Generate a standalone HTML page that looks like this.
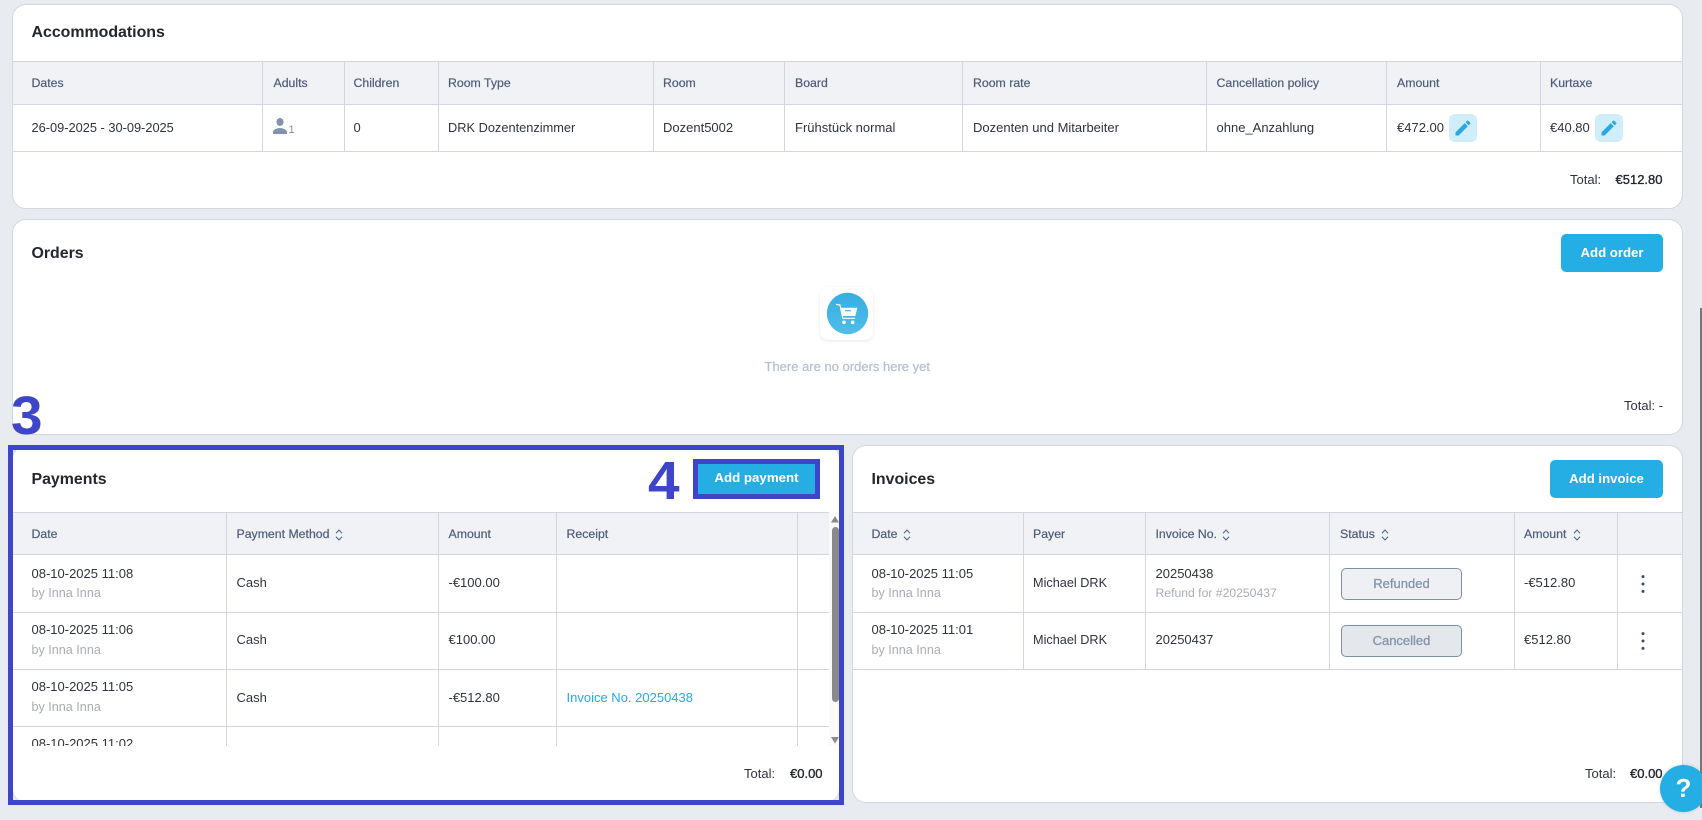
<!DOCTYPE html>
<html lang="en">
<head>
<meta charset="utf-8">
<title>Booking</title>
<style>
html,body{margin:0;padding:0;width:1702px;height:820px;overflow:hidden;background:#e8ebf0;font-family:"Liberation Sans",sans-serif;color:#2b2f36}
.card{position:absolute;background:#fff;border:1px solid #d3d7de;border-radius:14px;box-sizing:border-box}
.t{position:absolute;white-space:nowrap;line-height:20px;font-size:13px;color:#2f333a}
.ti{font-size:15.9px;font-weight:700;color:#23262c}
.th{font-size:12.3px;color:#4d5c78;-webkit-text-stroke:.2px #4d5c78}
.by{font-size:12.6px;color:#a9acb2}
.b{-webkit-text-stroke:.35px #23262c;color:#23262c}
.h{position:absolute;height:1px;background:#d3d6df}
.v{position:absolute;width:1px;background:#d3d6df}
.hd{position:absolute;background:#f0f2f6}
.btn{position:absolute;background:#25aee4;border-radius:5px;color:#fff;font-size:13.2px;font-weight:700;line-height:38px;text-align:center}
.edit{position:absolute;width:28px;height:28px;background:#d0eefa;border-radius:6px}
.edit svg{position:absolute;left:4px;top:4px}
.st{position:absolute;box-sizing:border-box;border:1px solid #7d90aa;border-radius:5px;text-align:center;font-size:13px;line-height:30px;color:#8494ab;-webkit-text-stroke:.3px #8494ab;background:#eef0f4}
svg{position:absolute;display:block}
.big{position:absolute;font-weight:700;font-size:54px;line-height:60px;color:#3f45c9;transform:scaleX(1.05);transform-origin:0 0}
a{color:#2aa9e1;text-decoration:none}
</style>
</head>
<body>

<!-- Accommodations -->
<div class="card" style="left:12px;top:4px;width:1671px;height:205px"></div>
<div class="t ti" style="left:31.5px;top:23px">Accommodations</div>
<div class="hd" style="left:13px;top:61px;width:1669px;height:43px"></div>
<div class="h" style="left:13px;top:61px;width:1669px"></div>
<div class="h" style="left:13px;top:104px;width:1669px"></div>
<div class="h" style="left:13px;top:151px;width:1669px"></div>
<div class="v" style="left:262px;top:61px;height:90px"></div>
<div class="v" style="left:344px;top:61px;height:90px"></div>
<div class="v" style="left:438px;top:61px;height:90px"></div>
<div class="v" style="left:653px;top:61px;height:90px"></div>
<div class="v" style="left:784px;top:61px;height:90px"></div>
<div class="v" style="left:962px;top:61px;height:90px"></div>
<div class="v" style="left:1206px;top:61px;height:90px"></div>
<div class="v" style="left:1386px;top:61px;height:90px"></div>
<div class="v" style="left:1540px;top:61px;height:90px"></div>
<div class="t th" style="left:31.5px;top:73px">Dates</div>
<div class="t th" style="left:273.5px;top:73px">Adults</div>
<div class="t th" style="left:353.5px;top:73px">Children</div>
<div class="t th" style="left:448px;top:73px">Room Type</div>
<div class="t th" style="left:663px;top:73px">Room</div>
<div class="t th" style="left:795px;top:73px">Board</div>
<div class="t th" style="left:973px;top:73px">Room rate</div>
<div class="t th" style="left:1216.5px;top:73px">Cancellation policy</div>
<div class="t th" style="left:1397px;top:73px">Amount</div>
<div class="t th" style="left:1550px;top:73px">Kurtaxe</div>
<div class="t" style="left:31.5px;top:117.5px;font-size:12.8px">26-09-2025 - 30-09-2025</div>
<svg style="left:273px;top:118px" width="14" height="16" viewBox="4 4 16 16" preserveAspectRatio="none"><path fill="#8293ab" d="M12 12c2.21 0 4-1.79 4-4s-1.79-4-4-4-4 1.79-4 4 1.79 4 4 4zm0 2c-2.67 0-8 1.34-8 4v2h16v-2c0-2.66-5.33-4-8-4z"/></svg>
<div class="t" style="left:288.5px;top:120px;font-size:11px;color:#8b8f96">1</div>
<div class="t" style="left:353.5px;top:117.5px">0</div>
<div class="t" style="left:448px;top:117.5px;font-size:12.8px">DRK Dozentenzimmer</div>
<div class="t" style="left:663px;top:117.5px">Dozent5002</div>
<div class="t" style="left:795px;top:117.5px">Frühstück normal</div>
<div class="t" style="left:973px;top:117.5px">Dozenten und Mitarbeiter</div>
<div class="t" style="left:1216.5px;top:117.5px">ohne_Anzahlung</div>
<div class="t" style="left:1397px;top:117.5px">€472.00</div>
<div class="edit" style="left:1449px;top:114px"><svg width="20" height="20" viewBox="0 0 24 24"><path fill="#2aa8e6" d="M3 17.25V21h3.75L17.81 9.94l-3.75-3.75L3 17.25zM20.71 7.04c.39-.39.39-1.02 0-1.41l-2.34-2.34c-.39-.39-1.02-.39-1.41 0l-1.83 1.83 3.75 3.75 1.83-1.83z"/></svg></div>
<div class="t" style="left:1550px;top:117.5px">€40.80</div>
<div class="edit" style="left:1595px;top:114px"><svg width="20" height="20" viewBox="0 0 24 24"><path fill="#2aa8e6" d="M3 17.25V21h3.75L17.81 9.94l-3.75-3.75L3 17.25zM20.71 7.04c.39-.39.39-1.02 0-1.41l-2.34-2.34c-.39-.39-1.02-.39-1.41 0l-1.83 1.83 3.75 3.75 1.83-1.83z"/></svg></div>
<div class="t" style="left:1570px;top:170px">Total:</div>
<div class="t b" style="left:1615.5px;top:170px">€512.80</div>

<!-- Orders -->
<div class="card" style="left:12px;top:219px;width:1671px;height:216px"></div>
<div class="t ti" style="left:31.5px;top:243.5px">Orders</div>
<div class="btn" style="left:1561px;top:234px;width:102px;height:38px">Add order</div>
<div style="position:absolute;left:820px;top:287px;width:53px;height:53px;background:#fff;border-radius:8px;box-shadow:0 1px 3px rgba(60,70,90,.13)"></div>
<svg style="left:820px;top:287px" width="53" height="53" viewBox="820 287 53 53">
<defs><linearGradient id="g" x1="0" y1="0" x2="0" y2="1"><stop offset="0" stop-color="#35aee2"/><stop offset="1" stop-color="#50bde9"/></linearGradient></defs>
<circle cx="847.5" cy="313.5" r="20.7" fill="url(#g)"/>
<path d="M836 304.4l4 .6 2.8 13.3h12.4" fill="none" stroke="#fff" stroke-width="1.2"/>
<path d="M840.2 307.7h17.1l-2 8.3h-13.2z" fill="#fff"/>
<path d="M845 310.7h6" stroke="#45b5e6" stroke-width="1.2"/>
<circle cx="844" cy="322.3" r="1.8" fill="#fff"/><circle cx="852.7" cy="322.3" r="1.8" fill="#fff"/>
</svg>
<div class="t" style="left:764.5px;top:357px;color:#b5c0d1;-webkit-text-stroke:.25px #b5c0d1">There are no orders here yet</div>
<div class="t" style="left:1624px;top:395.5px">Total: -</div>
<div class="big" style="left:11px;top:386px">3</div>

<!-- Payments -->
<div class="card" style="left:12px;top:445px;width:828px;height:358px"></div>
<div class="t ti" style="left:31.5px;top:470px">Payments</div>
<div class="hd" style="left:13px;top:512px;width:816px;height:42px"></div>
<div style="position:absolute;left:13px;top:512px;width:816px;height:234px;overflow:hidden">
  <div class="h" style="left:0;top:0;width:816px"></div>
  <div class="h" style="left:0;top:42px;width:816px"></div>
  <div class="h" style="left:0;top:100px;width:816px"></div>
  <div class="h" style="left:0;top:157px;width:816px"></div>
  <div class="h" style="left:0;top:214px;width:816px"></div>
  <div class="v" style="left:213px;top:0;height:234px"></div>
  <div class="v" style="left:425px;top:0;height:234px"></div>
  <div class="v" style="left:543px;top:0;height:234px"></div>
  <div class="v" style="left:784px;top:0;height:234px"></div>
  <div class="t th" style="left:18.5px;top:12px">Date</div>
  <div class="t th" style="left:223.5px;top:12px">Payment Method</div>
  <div class="t th" style="left:435.5px;top:12px">Amount</div>
  <div class="t th" style="left:553.5px;top:12px">Receipt</div>
  <svg style="left:322px;top:16px" width="8" height="14" viewBox="0 0 8 14"><path d="M1 5.2L4 2l3 3.2M1 8.8L4 12l3-3.2" fill="none" stroke="#55668a" stroke-width="1.1"/></svg>

  <div class="t" style="left:18.5px;top:52px">08-10-2025 11:08</div>
  <div class="t by" style="left:18.5px;top:71px">by Inna Inna</div>
  <div class="t" style="left:223.5px;top:61px">Cash</div>
  <div class="t" style="left:435.5px;top:61px">-€100.00</div>

  <div class="t" style="left:18.5px;top:108px">08-10-2025 11:06</div>
  <div class="t by" style="left:18.5px;top:128px">by Inna Inna</div>
  <div class="t" style="left:223.5px;top:118px">Cash</div>
  <div class="t" style="left:435.5px;top:118px">€100.00</div>

  <div class="t" style="left:18.5px;top:165px">08-10-2025 11:05</div>
  <div class="t by" style="left:18.5px;top:185px">by Inna Inna</div>
  <div class="t" style="left:223.5px;top:176px">Cash</div>
  <div class="t" style="left:435.5px;top:176px">-€512.80</div>
  <div class="t" style="left:553.5px;top:176px"><a>Invoice No. 20250438</a></div>

  <div class="t" style="left:18.5px;top:222px">08-10-2025 11:02</div>
</div>
<div style="position:absolute;left:829px;top:512px;width:10px;height:234px;background:#fafafa"></div>
<svg style="left:829px;top:514px" width="10" height="232" viewBox="0 0 10 232">
<path d="M2 8.5L6 2l4 6.5z" fill="#8a8a8a"/>
<rect x="3" y="13" width="7" height="175" rx="3.5" fill="#8a8a8a"/>
<path d="M2 223l4 6.5 4-6.5z" fill="#8a8a8a"/>
</svg>
<div class="t" style="left:744px;top:763.5px">Total:</div>
<div class="t b" style="left:790px;top:763.5px">€0.00</div>

<!-- Outline 3 -->
<div style="position:absolute;left:8px;top:445px;width:836px;height:360px;border:5px solid #3f45c9;box-sizing:border-box"></div>
<div class="big" style="left:648px;top:451px">4</div>
<div style="position:absolute;left:693px;top:459px;width:127px;height:40px;border:5px solid #3f45c9;box-sizing:border-box;background:#25aee4;color:#fff;font-size:13.3px;font-weight:700;text-align:center;line-height:27px">Add payment</div>

<!-- Invoices -->
<div class="card" style="left:852px;top:445px;width:831px;height:358px"></div>
<div class="t ti" style="left:871.5px;top:470px">Invoices</div>
<div class="btn" style="left:1550px;top:460px;width:113px;height:38px">Add invoice</div>
<div class="hd" style="left:853px;top:512px;width:829px;height:42px"></div>
<div class="h" style="left:853px;top:512px;width:829px"></div>
<div class="h" style="left:853px;top:554px;width:829px"></div>
<div class="h" style="left:853px;top:612px;width:829px"></div>
<div class="h" style="left:853px;top:669px;width:829px"></div>
<div class="v" style="left:1023px;top:512px;height:157px"></div>
<div class="v" style="left:1145px;top:512px;height:157px"></div>
<div class="v" style="left:1329px;top:512px;height:157px"></div>
<div class="v" style="left:1514px;top:512px;height:157px"></div>
<div class="v" style="left:1617px;top:512px;height:157px"></div>
<div class="t th" style="left:871.5px;top:524px">Date</div>
<div class="t th" style="left:1033px;top:524px">Payer</div>
<div class="t th" style="left:1155.5px;top:524px">Invoice No.</div>
<div class="t th" style="left:1340px;top:524px">Status</div>
<div class="t th" style="left:1524px;top:524px">Amount</div>
<svg style="left:903px;top:528px" width="8" height="14" viewBox="0 0 8 14"><path d="M1 5.2L4 2l3 3.2M1 8.8L4 12l3-3.2" fill="none" stroke="#55668a" stroke-width="1.1"/></svg>
<svg style="left:1222px;top:528px" width="8" height="14" viewBox="0 0 8 14"><path d="M1 5.2L4 2l3 3.2M1 8.8L4 12l3-3.2" fill="none" stroke="#55668a" stroke-width="1.1"/></svg>
<svg style="left:1381px;top:528px" width="8" height="14" viewBox="0 0 8 14"><path d="M1 5.2L4 2l3 3.2M1 8.8L4 12l3-3.2" fill="none" stroke="#55668a" stroke-width="1.1"/></svg>
<svg style="left:1573px;top:528px" width="8" height="14" viewBox="0 0 8 14"><path d="M1 5.2L4 2l3 3.2M1 8.8L4 12l3-3.2" fill="none" stroke="#55668a" stroke-width="1.1"/></svg>

<div class="t" style="left:871.5px;top:564px">08-10-2025 11:05</div>
<div class="t by" style="left:871.5px;top:583px">by Inna Inna</div>
<div class="t" style="left:1033px;top:573px;font-size:12.7px">Michael DRK</div>
<div class="t" style="left:1155.5px;top:564px">20250438</div>
<div class="t by" style="left:1155.5px;top:583px;font-size:12.2px">Refund for #20250437</div>
<div class="st" style="left:1341px;top:568px;width:121px;height:32px">Refunded</div>
<div class="t" style="left:1524px;top:573px">-€512.80</div>
<svg style="left:1640px;top:574px" width="6" height="20" viewBox="0 0 6 20"><circle cx="3" cy="2.6" r="1.5" fill="#3c4a63"/><circle cx="3" cy="10" r="1.5" fill="#3c4a63"/><circle cx="3" cy="17.4" r="1.5" fill="#3c4a63"/></svg>

<div class="t" style="left:871.5px;top:620px">08-10-2025 11:01</div>
<div class="t by" style="left:871.5px;top:640px">by Inna Inna</div>
<div class="t" style="left:1033px;top:630px;font-size:12.7px">Michael DRK</div>
<div class="t" style="left:1155.5px;top:630px">20250437</div>
<div class="st" style="left:1341px;top:625px;width:121px;height:32px;background:#e4e7ec">Cancelled</div>
<div class="t" style="left:1524px;top:630px">€512.80</div>
<svg style="left:1640px;top:631px" width="6" height="20" viewBox="0 0 6 20"><circle cx="3" cy="2.6" r="1.5" fill="#3c4a63"/><circle cx="3" cy="10" r="1.5" fill="#3c4a63"/><circle cx="3" cy="17.4" r="1.5" fill="#3c4a63"/></svg>

<div class="t" style="left:1585px;top:763.5px">Total:</div>
<div class="t b" style="left:1630px;top:763.5px">€0.00</div>

<!-- Page scrollbar -->
<div style="position:absolute;left:1700px;top:308px;width:2px;height:500px;background:#777"></div>

<!-- Help -->
<div style="position:absolute;left:1660px;top:765px;width:47px;height:47px;border-radius:50%;background:#25aee4;color:#fff;font-weight:700;font-size:26px;line-height:47px;text-align:center;box-shadow:0 0 3px rgba(40,60,90,.2)">?</div>

</body>
</html>
